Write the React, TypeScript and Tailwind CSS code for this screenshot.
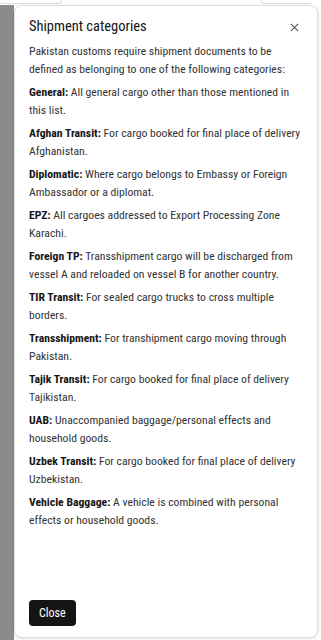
import React from 'react';

const categories: [string, string][] = [
  ['General:', 'All general cargo other than those mentioned in this list.'],
  ['Afghan Transit:', 'For cargo booked for final place of delivery Afghanistan.'],
  ['Diplomatic:', 'Where cargo belongs to Embassy or Foreign Ambassador or a diplomat.'],
  ['EPZ:', 'All cargoes addressed to Export Processing Zone Karachi.'],
  ['Foreign TP:', 'Transshipment cargo will be discharged from vessel A and reloaded on vessel B for another country.'],
  ['TIR Transit:', 'For sealed cargo trucks to cross multiple borders.'],
  ['Transshipment:', 'For transhipment cargo moving through Pakistan.'],
  ['Tajik Transit:', 'For cargo booked for final place of delivery Tajikistan.'],
  ['UAB:', 'Unaccompanied baggage/personal effects and household goods.'],
  ['Uzbek Transit:', 'For cargo booked for final place of delivery Uzbekistan.'],
  ['Vehicle Baggage:', 'A vehicle is combined with personal effects or household goods.'],
];

const App: React.FC = () => {
  return (
    <div
      className="relative w-[321px] h-[640px] overflow-hidden bg-white"
      style={{ fontFamily: '"Roboto Condensed", Roboto, sans-serif' }}
    >
      {/* page behind the drawer */}
      <div className="flex h-[5px] justify-between">
        <div className="w-[62px] h-[4px] border-b border-r border-[#dcdcdc] rounded-br-[6px]" />
        <div className="w-[50px] h-[4px] mr-[10px] border-b border-l border-[#dcdcdc] rounded-bl-[6px]" />
      </div>
      <div className="flex h-[635px]">
        <div className="w-[14px] bg-[#8b8b8b]" />
        <div className="flex-1 flex flex-col bg-white border border-[#dedede] rounded-[8px] shadow-[0_1px_4px_rgba(0,0,0,0.12)] mr-[3px] mb-[2px] pl-[14px] pr-[12px] pt-[11px] pb-[11px]">
          <div className="flex items-center justify-between">
            <h2 className="text-[14.5px] leading-[20px] text-[#141414]">Shipment categories</h2>
            <button className="w-[16px] h-[16px] flex items-center justify-center text-[#545454] mr-[3px]" aria-label="Close">
              <svg width="9" height="9" viewBox="0 0 10 10" fill="none" stroke="currentColor" strokeWidth="1.2">
                <path d="M1 1l8 8M9 1l-8 8" />
              </svg>
            </button>
          </div>
          <div className="mt-[5px] flex flex-col gap-[5px] text-[11.7px] leading-[18px] text-[#333333]">
            <p>Pakistan customs require shipment documents to be defined as belonging to one of the following categories:</p>
            {categories.map(([name, text]) => (
              <p key={name}>
                <span className="font-bold text-[#141414]">{name}</span> {text}
              </p>
            ))}
          </div>
          <div className="mt-auto">
            <button className="h-[26px] px-[10px] rounded-[4px] bg-[#141414] text-white text-[12px]">Close</button>
          </div>
        </div>
      </div>
    </div>
  );
};

export default App;
